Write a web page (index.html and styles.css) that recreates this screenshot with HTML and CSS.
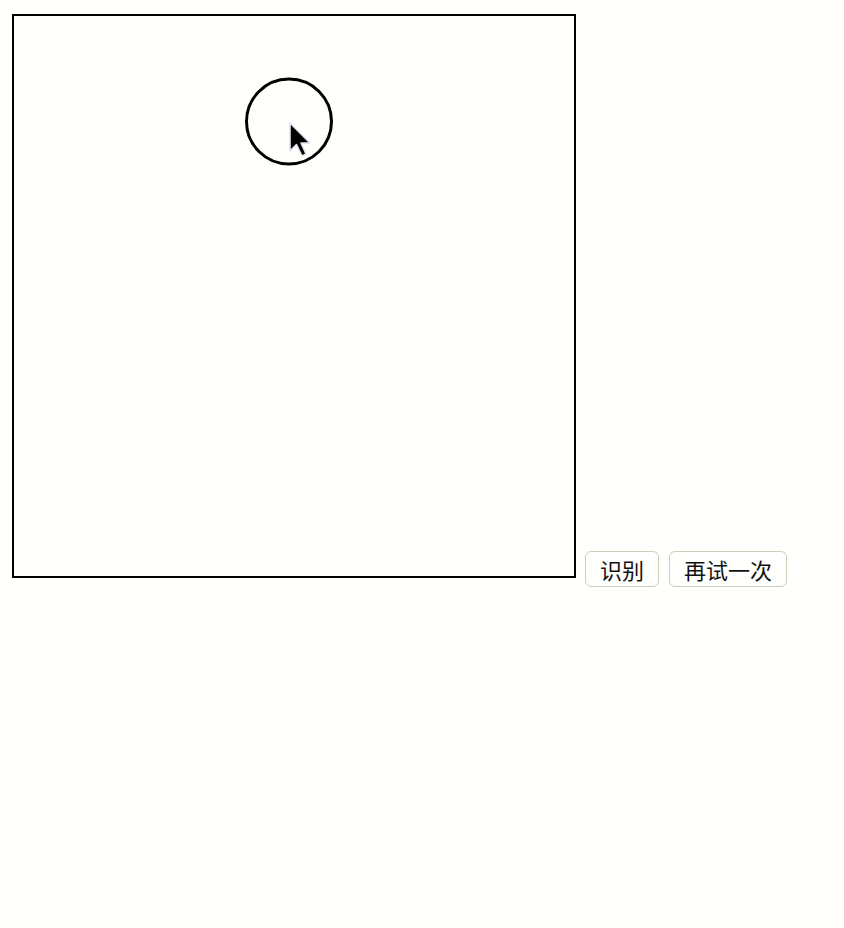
FILE: index.html
```html
<!DOCTYPE html>
<html lang="zh-CN">
<head>
<meta charset="utf-8">
<title>识别</title>
<link rel="stylesheet" href="styles.css">
</head>
<body>
<div class="stage">
<div class="board"><svg class="sketch" width="560" height="560" viewBox="0 0 560 560" xmlns="http://www.w3.org/2000/svg"><circle cx="275" cy="105.5" r="42.5" fill="none" stroke="#000" stroke-width="3"/><path d="M276 107 L276 135 L282.5 128.5 L288 140 L292 138 L287 127 L296 127 Z" fill="#000" stroke="#e4e2f0" stroke-width="1.6" stroke-linejoin="round"/></svg></div>
<button class="btn btn-first">识别</button>
<button class="btn">再试一次</button>
</div>
</body>
</html>
```
FILE: styles.css
```css
html, body {
  margin: 0;
  background: #fffffb;
}
.stage {
  padding: 14px 0 0 12px;
  font-size: 0;
  font-family: "Noto Sans CJK SC", "Noto Sans", sans-serif;
}
.board {
  display: inline-block;
  width: 560px;
  height: 560px;
  border: 2px solid #000;
  background: #fffffb;
}
.sketch {
  display: block;
}
.btn {
  display: inline-block;
  vertical-align: -1px;
  font-family: "Noto Sans CJK SC", "Noto Sans", sans-serif;
  font-size: 22px;
  color: #111;
  background: #fffffd;
  border: 1px solid #cdcfb8;
  border-radius: 6px;
  padding: 1px 14px;
  margin: 0 0 0 10px;
  cursor: pointer;
}
.btn-first {
  margin-left: 9px;
}
```
